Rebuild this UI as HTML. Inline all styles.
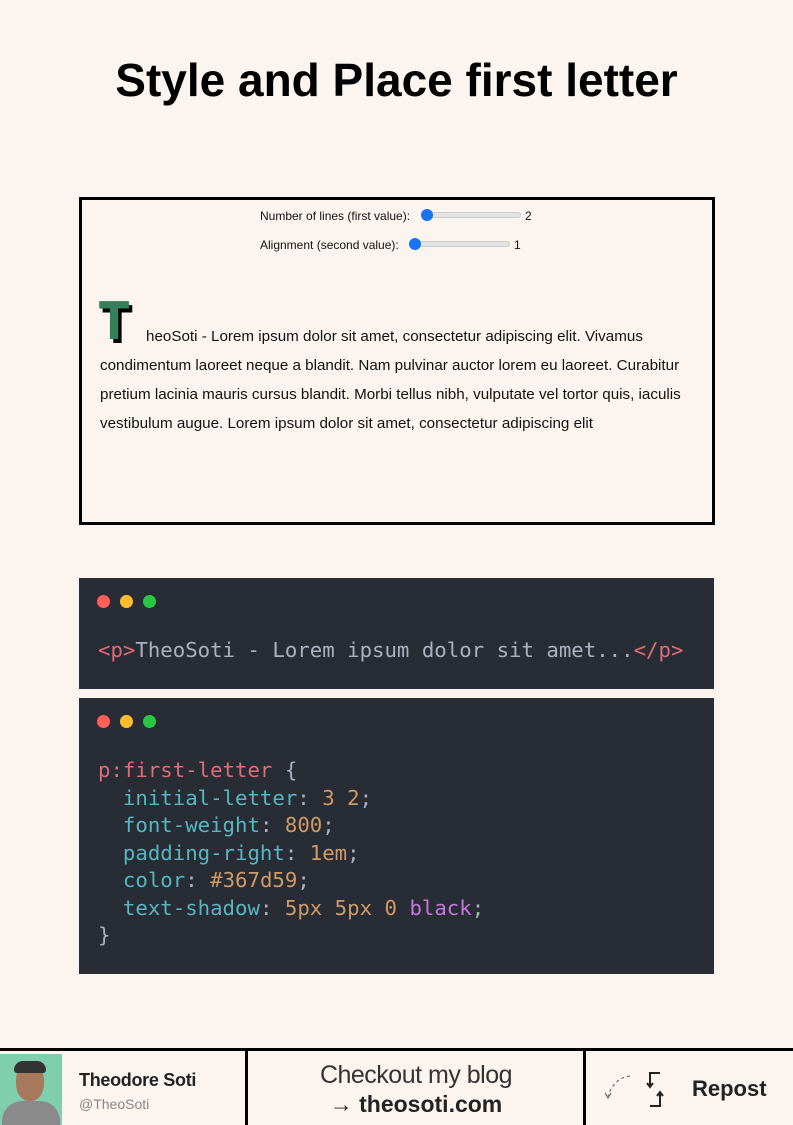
<!DOCTYPE html>
<html><head><meta charset="utf-8"><style>
*{margin:0;padding:0;box-sizing:border-box}
body{width:793px;height:1122px;background:#fcf5ef;position:relative;overflow:hidden;font-family:"Liberation Sans",sans-serif}
h1{position:absolute;top:54px;left:0;width:793px;text-align:center;font-size:46px;font-weight:700;color:#000;line-height:52px}
.box{position:absolute;left:79px;top:197px;width:636px;height:328px;border:3px solid #000}
.ctl{position:absolute;font-size:12px;color:#111}
.sl{position:absolute;height:6px;background:#e3e3e3;border:1px solid #ccc;border-radius:3px}
.kn{position:absolute;width:12px;height:12px;border-radius:50%;background:#1a73f0}
.txt{position:absolute;left:18px;top:122px;width:590px;font-size:15.2px;line-height:29px;color:#111}
.T{position:absolute;left:99px;top:296px;font-size:52px;font-weight:900;color:#367d59;text-shadow:4px 4px 0 #000;line-height:1;font-family:"DejaVu Sans",sans-serif;transform:scaleX(0.85);transform-origin:left}
.code{position:absolute;left:79px;width:635px;background:#282c34;font-family:"DejaVu Sans Mono","Liberation Mono",monospace;font-size:20.7px;color:#abb2bf}
.d{position:absolute;top:17px;width:13px;height:13px;border-radius:50%}
.ln{position:absolute;left:19px;white-space:pre;line-height:27.5px}
.r{color:#e06c75}.c{color:#56b6c2}.o{color:#d19a66}.p{color:#c678dd}
.foot{position:absolute;left:0;top:1048px;width:793px;height:74px;border-top:3px solid #000}
.vl{position:absolute;top:0;width:3px;height:74px;background:#000}
</style></head><body>
<h1>Style and Place first letter</h1>
<div class="box">
 <div class="ctl" style="left:178px;top:9px">Number of lines (first value):</div>
 <div class="sl" style="left:343px;top:12px;width:96px"></div><div class="kn" style="left:339px;top:9px"></div>
 <div class="ctl" style="left:443px;top:9px">2</div>
 <div class="ctl" style="left:178px;top:38px">Alignment (second value):</div>
 <div class="sl" style="left:330px;top:41px;width:98px"></div><div class="kn" style="left:327px;top:38px"></div>
 <div class="ctl" style="left:432px;top:38px">1</div>
 <div class="txt"><span style="display:inline-block;width:46px"></span>heoSoti - Lorem ipsum dolor sit amet, consectetur adipiscing elit. Vivamus condimentum laoreet neque a blandit. Nam pulvinar auctor lorem eu laoreet. Curabitur pretium lacinia mauris cursus blandit. Morbi tellus nibh, vulputate vel tortor quis, iaculis vestibulum augue. Lorem ipsum dolor sit amet, consectetur adipiscing elit</div>
</div>
<div class="T">T</div>
<div class="code" style="top:578px;height:111px">
 <div class="d" style="left:18px;background:#ff5f57"></div><div class="d" style="left:41px;background:#febc2e"></div><div class="d" style="left:64px;background:#28c840"></div>
 <div class="ln" style="top:59px"><span class="r">&lt;p&gt;</span>TheoSoti - Lorem ipsum dolor sit amet...<span class="r">&lt;/p&gt;</span></div>
</div>
<div class="code" style="top:698px;height:276px">
 <div class="d" style="left:18px;background:#ff5f57"></div><div class="d" style="left:41px;background:#febc2e"></div><div class="d" style="left:64px;background:#28c840"></div>
 <div class="ln" style="top:59px"><span class="r">p:first-letter</span> {
  <span class="c">initial-letter</span>: <span class="o">3 2</span>;
  <span class="c">font-weight</span>: <span class="o">800</span>;
  <span class="c">padding-right</span>: <span class="o">1em</span>;
  <span class="c">color</span>: <span class="o">#367d59</span>;
  <span class="c">text-shadow</span>: <span class="o">5px 5px 0</span> <span class="p">black</span>;
}</div>
</div>
<div class="foot">
 <div style="position:absolute;left:0;top:3px;width:62px;height:71px;background:#7fcfae"></div>
 <div style="position:absolute;left:16px;top:12px;width:28px;height:38px;border-radius:45%;background:#a77a5e"></div>
 <div style="position:absolute;left:14px;top:10px;width:32px;height:12px;border-radius:12px 12px 4px 4px;background:#333"></div>
 <div style="position:absolute;left:2px;top:50px;width:58px;height:24px;border-radius:20px 20px 0 0;background:#8a8a8a"></div>
 <div style="position:absolute;left:79px;top:19px;font-size:18px;font-weight:700;color:#222;letter-spacing:-0.3px">Theodore Soti</div>
 <div style="position:absolute;left:79px;top:45px;font-size:14px;color:#888">@TheoSoti</div>
 <div class="vl" style="left:245px"></div>
 <div style="position:absolute;left:248px;top:10px;width:336px;text-align:center;font-size:25px;color:#333;letter-spacing:-0.5px">Checkout my blog</div>
 <div style="position:absolute;left:248px;top:40px;width:336px;text-align:center;font-size:23px;font-weight:700;color:#222">→ theosoti.com</div>
 <div class="vl" style="left:583px"></div>
 <svg style="position:absolute;left:600px;top:15px" width="90" height="45" viewBox="0 0 90 45"><path d="M30 10 Q14 12 8 30" stroke="#555" fill="none" stroke-dasharray="3 3"/><path d="M5 27 L8 32 L11 27" stroke="#555" fill="none"/><path d="M60 7 H50 V20 M47 17 L50 21 L53 17 M50 40 H60 V27 M57 30 L60 26 L63 30" stroke="#222" stroke-width="2" fill="none"/></svg>
 <div style="position:absolute;left:692px;top:25px;font-size:22px;font-weight:700;color:#222">Repost</div>
</div>
</body></html>
